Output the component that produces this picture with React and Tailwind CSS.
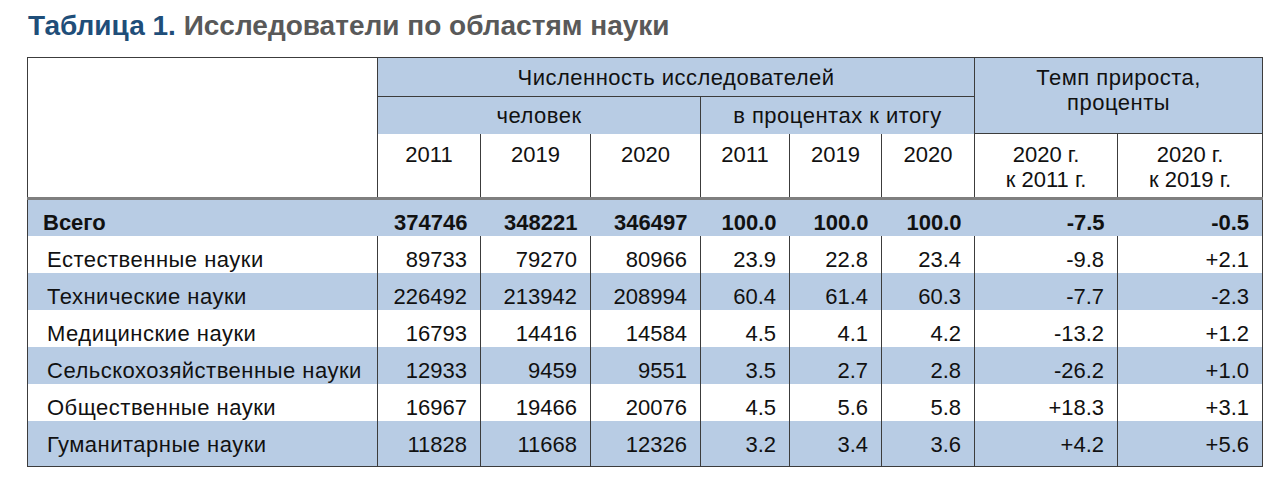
const years = ["2011", "2019", "2020", "2011", "2019", "2020"]

const rows = [
  ["Естественные науки", "89733", "79270", "80966", "23.9", "22.8", "23.4", "-9.8", "+2.1"],
  ["Технические науки", "226492", "213942", "208994", "60.4", "61.4", "60.3", "-7.7", "-2.3"],
  ["Медицинские науки", "16793", "14416", "14584", "4.5", "4.1", "4.2", "-13.2", "+1.2"],
  ["Сельскохозяйственные науки", "12933", "9459", "9551", "3.5", "2.7", "2.8", "-26.2", "+1.0"],
  ["Общественные науки", "16967", "19466", "20076", "4.5", "5.6", "5.8", "+18.3", "+3.1"],
  ["Гуманитарные науки", "11828", "11668", "12326", "3.2", "3.4", "3.6", "+4.2", "+5.6"],
]

const total = ["374746", "348221", "346497", "100.0", "100.0", "100.0", "-7.5", "-0.5"]

export default function App() {
  return (
    <div className="w-[1280px] h-[485px] bg-white font-['Liberation_Sans',Arial,sans-serif] text-[#111]">
      <h1 className="pl-[28px] pt-[10px] h-[57px] text-[28px] leading-[32px] font-bold font-['Liberation_Sans_Narrow','Arial_Narrow','Liberation_Sans',sans-serif]">
        <span className="text-[#1f4e79]">Таблица 1.</span>{" "}
        <span className="text-[#595959]">Исследователи по областям науки</span>
      </h1>

      <table className="ml-[27px] w-[1235px] table-fixed border-collapse border border-[#3c3c3c] text-[22px] leading-[25px]">
        <colgroup>
          <col className="w-[350px]" />
          <col className="w-[103px]" />
          <col className="w-[110px]" />
          <col className="w-[110px]" />
          <col className="w-[89px]" />
          <col className="w-[92px]" />
          <col className="w-[93px]" />
          <col className="w-[143px]" />
          <col className="w-[145px]" />
        </colgroup>
        <thead>
          <tr className="h-[39px]">
            <th rowSpan={3} className="bg-white border-r border-[#3c3c3c]" />
            <th colSpan={6} className="bg-[#b8cce4] font-normal tracking-[0.5px] border-b border-[#3c3c3c]">
              Численность исследователей
            </th>
            <th
              colSpan={2}
              rowSpan={2}
              className="bg-[#b8cce4] font-normal tracking-[0.5px] align-top pt-[7px] border-l border-b border-[#3c3c3c]"
            >
              Темп прироста,
              <br />
              проценты
            </th>
          </tr>
          <tr className="h-[37px]">
            <th colSpan={3} className="bg-[#b8cce4] font-normal tracking-[0.5px] border-r border-[#3c3c3c]">
              человек
            </th>
            <th colSpan={3} className="bg-[#b8cce4] font-normal tracking-[0.5px]">
              в процентах к итогу
            </th>
          </tr>
          <tr className="h-[65px] border-b-[3px] border-[#7f7f7f]">
            {years.map((y, i) => (
              <th key={i} className="font-normal align-top pt-[8px] border-r border-[#3c3c3c]">
                {y}
              </th>
            ))}
            <th className="font-normal align-top pt-[8px] border-r border-[#3c3c3c]">
              2020 г.
              <br />к 2011 г.
            </th>
            <th className="font-normal align-top pt-[8px]">
              2020 г.
              <br />к 2019 г.
            </th>
          </tr>
        </thead>
        <tbody>
          <tr className="h-[37px] bg-[#b8cce4] font-bold">
            <td className="pl-[15px] pt-[9px]">Всего</td>
            {total.map((v, i) => (
              <td key={i} className="text-right pr-[13px] pt-[9px]">
                {v}
              </td>
            ))}
          </tr>
          {rows.map((r, ri) => {
            const last = ri === rows.length - 1
            return (
              <tr
                key={ri}
                className={`${last ? "h-[46px]" : "h-[37px]"} ${ri % 2 ? "bg-[#b8cce4]" : "bg-white"}`}
              >
                <td
                  className={`pl-[19px] ${last ? "pt-[2px]" : "pt-[11px]"} tracking-[0.5px] border-r border-[#3c3c3c] whitespace-nowrap`}
                >
                  {r[0]}
                </td>
                {r.slice(1).map((v, i) => (
                  <td
                    key={i}
                    className={`text-right pr-[13px] ${last ? "pt-[2px]" : "pt-[11px]"} ${i < 7 ? "border-r border-[#3c3c3c]" : ""}`}
                  >
                    {v}
                  </td>
                ))}
              </tr>
            )
          })}
        </tbody>
      </table>
    </div>
  )
}
